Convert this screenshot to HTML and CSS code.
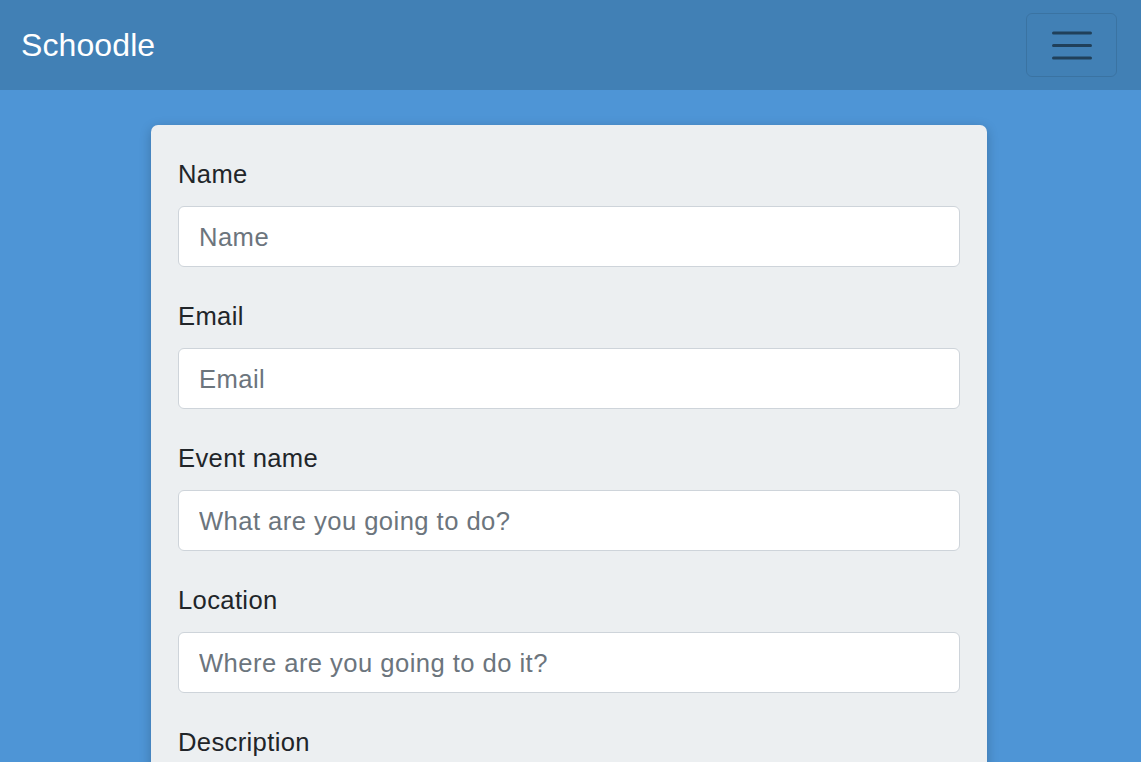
FILE: index.html
```html
<!DOCTYPE html>
<html lang="en">
<head>
<meta charset="utf-8">
<title>Schoodle</title>
<link rel="stylesheet" href="styles.css">
</head>
<body>
<nav class="navbar">
  <a class="brand" href="#">Schoodle</a>
  <button class="toggler" type="button" aria-label="Toggle navigation">
    <svg width="40" height="30" viewBox="0 0 40 30">
      <path d="M1.5 3h37M1.5 15.5h37M1.5 28h37" stroke="rgba(0,0,0,0.5)" stroke-width="3" stroke-linecap="round" fill="none"/>
    </svg>
  </button>
</nav>
<main class="page">
  <form class="card">
    <div class="group">
      <label class="label">Name</label>
      <input class="input" type="text" placeholder="Name">
    </div>
    <div class="group">
      <label class="label">Email</label>
      <input class="input" type="text" placeholder="Email">
    </div>
    <div class="group">
      <label class="label">Event name</label>
      <input class="input" type="text" placeholder="What are you going to do?">
    </div>
    <div class="group">
      <label class="label">Location</label>
      <input class="input" type="text" placeholder="Where are you going to do it?">
    </div>
    <div class="group">
      <label class="label">Description</label>
      <textarea class="input area"></textarea>
    </div>
  </form>
</main>
</body>
</html>
```

FILE: styles.css
```css
html, body {
  margin: 0;
  padding: 0;
  height: 100%;
  overflow: hidden;
}
body {
  background: #4e95d6;
  font-family: "Liberation Sans", Arial, sans-serif;
  color: #212529;
}
.navbar {
  height: 90px;
  background: #4180b5;
  display: flex;
  align-items: center;
  justify-content: space-between;
  padding: 0 24px 0 21px;
  box-sizing: border-box;
}
.brand {
  color: #fff;
  text-decoration: none;
  font-size: 32px;
  line-height: 1;
  margin-top: -1px;
  letter-spacing: 0.1px;
}
.toggler {
  width: 91px;
  height: 64px;
  margin-top: -1px;
  border: 1.5px solid rgba(0,0,0,0.1);
  border-radius: 6px;
  background: transparent;
  display: flex;
  align-items: center;
  justify-content: center;
  padding: 0;
}
.page {
  display: flex;
  justify-content: flex-start;
  padding: 35px 0 0 151px;
}
.card {
  width: 836px;
  box-sizing: border-box;
  background: #eceff1;
  border-radius: 7px;
  padding: 30px 27px 0 27px;
  box-shadow: 0 3px 12px rgba(0,0,0,0.22);
  min-height: 800px;
}
.group {
  display: flex;
  flex-direction: column;
  margin-bottom: 30px;
}
.label {
  font-size: 25.6px;
  line-height: 38px;
  margin-bottom: 13px;
  color: #212529;
  letter-spacing: 0.35px;
}
.input {
  height: 61px;
  box-sizing: border-box;
  border: 1.6px solid #ced4da;
  border-radius: 6px;
  background: #fff;
  padding: 2px 20px 0 20px;
  font-family: "Liberation Sans", Arial, sans-serif;
  font-size: 25.6px;
  letter-spacing: 0.45px;
  color: #495057;
  outline: none;
}
.input::placeholder {
  color: #6c757d;
}
.area {
  height: 140px;
  resize: none;
}
```
